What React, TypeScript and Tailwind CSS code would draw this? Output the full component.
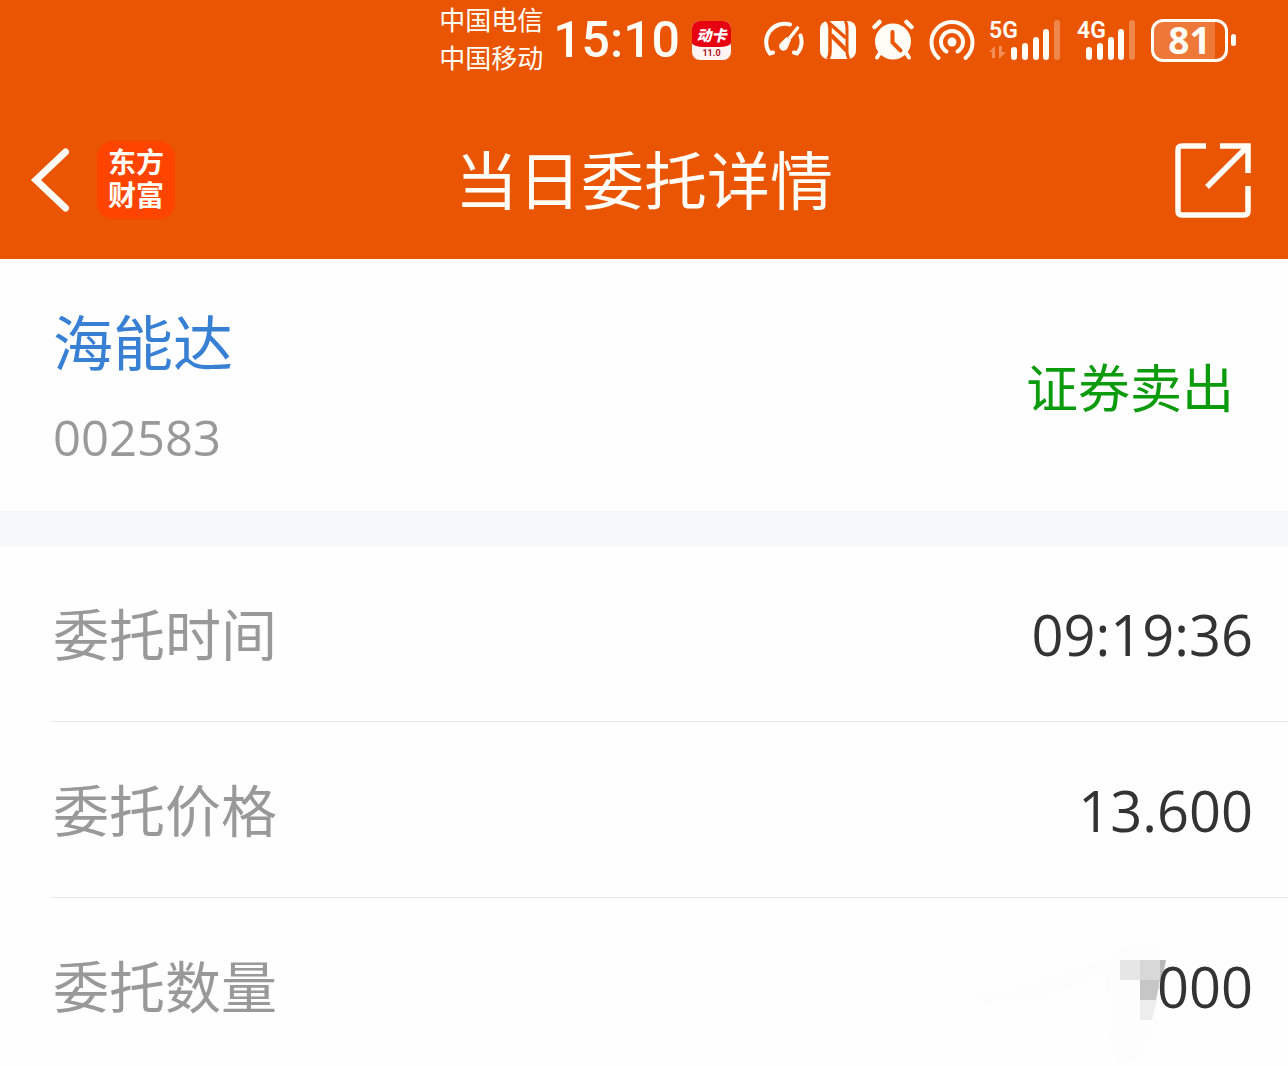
import React from "react";

interface OrderField {
    label: string;
    value: string;
    masked?: boolean;
}

const fields: OrderField[] = [
    { label: "委托时间", value: "09:19:36" },
    { label: "委托价格", value: "13.600" },
    { label: "委托数量", value: "000", masked: true },
];

export default function App() {
    return (
        <div className="min-h-screen bg-[#fefefe] font-['Open_Sans','Noto_Sans_CJK_SC',sans-serif] text-[#333333]">
            <div className="bg-[#ea5504] text-[#fffdf5]">
                <StatusBar />
                <TitleBar />
            </div>
            <main>
                <section className="flex items-center justify-between border-b-[35px] border-[#f6f8fa] pt-11 pr-[54px] pb-[39px] pl-[53px]">
                    <div>
                        <h2 className="text-[60px] leading-[80px] text-[#3880d4]">海能达</h2>
                        <p className="mt-5 text-[49px] leading-[69px] text-[#999999]">002583</p>
                    </div>
                    <p className="text-[52px] leading-[80px] text-[#0c9b0c]">证券卖出</p>
                </section>
                <dl>
                    {fields.map((field) => (
                        <FieldRow key={field.label} field={field} />
                    ))}
                </dl>
            </main>
        </div>
    );
}

function StatusBar() {
    return (
        <div className="flex h-20 items-center justify-end pr-[52px]">
            <div className="pb-0.5 text-[26px] leading-[38px]">
                <p>中国电信</p>
                <p>中国移动</p>
            </div>
            <time className="ml-2.5 font-['Roboto',sans-serif] text-[50px] leading-[76px] font-medium">15:10</time>
            <AppBadge />
            <div className="ml-8 flex items-center gap-[14px]">
                <GaugeIcon />
                <NfcIcon />
                <AlarmIcon />
                <HotspotIcon />
                <Signal5G />
                <Signal4G />
                <Battery />
            </div>
        </div>
    );
}

function TitleBar() {
    return (
        <header className="grid h-[179px] grid-cols-[1fr_auto_1fr] items-center px-[30px] pt-5">
            <div className="flex items-center gap-[27px]">
                <button type="button" aria-label="返回">
                    <svg
                        width="40"
                        height="66"
                        viewBox="0 0 40 66"
                        fill="none"
                        stroke="currentColor"
                        strokeWidth="7"
                        strokeLinecap="round"
                    >
                        <path d="M35.500 5 6 33l29.500 28" />
                    </svg>
                </button>
                <div className="flex h-[78px] w-[78px] items-center justify-center rounded-2xl bg-[#ff4400] pb-0.5 text-[28px] leading-[33px] font-bold">
                    <p>
                        东方
                        <br />
                        财富
                    </p>
                </div>
            </div>
            <h1 className="text-[63px] leading-[84px]">当日委托详情</h1>
            <button type="button" aria-label="分享" className="mr-[7px] justify-self-end">
                <svg width="76" height="76" viewBox="0 0 76 76" fill="none" stroke="currentColor" strokeWidth="5.5">
                    <path d="M31 4H7Q3 4 3 8v61q0 4 4 4h62q4 0 4-4V44" />
                    <path d="M45 4h28v27M72 5 32 45" />
                </svg>
            </button>
        </header>
    );
}

function FieldRow({ field }: { field: OrderField }) {
    return (
        <div className="group">
            <div className="relative flex items-center justify-between pt-12 pr-[35px] pb-[47px] pl-[53px] group-last:pb-8">
                <dt className="text-[56px] leading-[80px] text-[#999999]">{field.label}</dt>
                {field.masked && <Mosaic />}
                <dd className="relative text-[56px] leading-[80px]">{field.value}</dd>
            </div>
            <div className="bg-[#f9f9f9] pl-[52px] group-last:hidden">
                <div className="h-px bg-[#e9e9e9]" />
            </div>
        </div>
    );
}

// Pixelated smudge that hides the leading digits of the quantity
function Mosaic() {
    return (
        <svg className="absolute top-8 right-[118px]" width="200" height="136" viewBox="0 0 200 136" aria-hidden="true">
            <path
                d="M8 60 48 56 108 36Q148 26 158 12q24-10 38 8l-8 74-12 26q-18 22-32 8l-6-34-2-48-66 24-44 4Q2 84 8 60Z"
                fill="#fdfdfd"
            />
            <path d="M150 30h20v20h-20z" fill="#e6e6e6" />
            <path d="M170 30h20v20h-20z" fill="#d8d8d8" />
            <path d="M190 30h6l-4 20h-2z" fill="#b9b9b9" />
            <path d="M170 50h20l-4 20h-16z" fill="#c6c6c6" />
            <path d="M170 70h17l-5 20h-12z" fill="#ededed" />
        </svg>
    );
}

function AppBadge() {
    return (
        <div className="ml-3 flex h-[39px] w-[39px] flex-col overflow-hidden rounded-lg bg-[#fff4f2] text-center">
            <span className="h-[26px] rounded-b-[30%_4px] bg-[#e60012] text-[15px] leading-[28px] font-black text-white italic">
                动卡
            </span>
            <span className="font-['Roboto',sans-serif] text-[9px] leading-[13px] font-bold text-[#b01020]">11.0</span>
        </div>
    );
}

function GaugeIcon() {
    return (
        <svg width="42" height="40" viewBox="0 0 42 40" fill="none" stroke="currentColor" strokeLinecap="round">
            <path d="M27 4.500A18.500 18.500 0 0 0 7 33.500l3-1M37.500 15.500A18.500 18.500 0 0 1 34 33.500l-3-1" strokeWidth="4" />
            <path d="M34.500 8 22 24" strokeWidth="3.500" />
            <path d="M23.500 17 18 22.500a4.500 4.500 0 1 0 7 4.500L28 20Z" fill="currentColor" stroke="none" />
        </svg>
    );
}

function NfcIcon() {
    return (
        <svg width="38" height="40" viewBox="0 0 38 40">
            <rect x="1" y="1" width="36" height="38" rx="8" fill="currentColor" />
            <g fill="none" stroke="#ea5504">
                <path d="M8 0q3 3 3 8v24q0 4-2 7" strokeWidth="3.500" />
                <path d="M10 3 27 18" strokeWidth="3.500" />
                <path d="M12 15 28 31" strokeWidth="4" />
                <path d="M26 1q2 2 2 7v24q0 4 2 7" strokeWidth="3" />
            </g>
        </svg>
    );
}

function AlarmIcon() {
    return (
        <svg width="44" height="42" viewBox="0 0 44 42" fill="none" stroke="currentColor" strokeLinecap="round">
            <circle cx="22" cy="22.500" r="18" fill="currentColor" stroke="none" />
            <path d="M3.500 8 8.500 3M40.500 8l-5-5" strokeWidth="4.500" />
            <path d="M9 34l-3 4.500M35 34l3 4.500" strokeWidth="4" />
            <path d="M21.500 13v10.500l8 8" stroke="#ea5504" strokeWidth="4" />
        </svg>
    );
}

function HotspotIcon() {
    return (
        <svg width="46" height="42" viewBox="0 0 46 42" fill="none" stroke="currentColor" strokeWidth="4" strokeLinecap="round">
            <circle cx="23" cy="23" r="4.500" fill="currentColor" stroke="none" />
            <path d="M17.500 32.500a11 11 0 1 1 11 0" />
            <path d="M9.500 39A20.500 20.500 0 1 1 36.500 39" />
        </svg>
    );
}

function Signal5G() {
    return (
        <svg width="74" height="42" viewBox="0 0 74 42" fill="currentColor" className="overflow-visible">
            <text x="0" y="19" className="font-['Roboto',sans-serif] text-[23px] font-semibold">5G</text>
            <path d="M0 33l6-6v12H3v-6ZM10 27h3v6h4l-7 7Z" opacity="0.350" />
            <rect x="22" y="28" width="6" height="13" rx="3" />
            <rect x="33" y="24" width="6" height="17" rx="3" />
            <rect x="44" y="18" width="6" height="23" rx="3" />
            <rect x="54" y="10" width="6" height="31" rx="3" />
            <rect x="65" y="1" width="6" height="40" rx="3" opacity="0.300" />
        </svg>
    );
}

function Signal4G() {
    return (
        <svg width="60" height="42" viewBox="0 0 60 42" fill="currentColor" className="overflow-visible">
            <text x="0" y="19" className="font-['Roboto',sans-serif] text-[23px] font-semibold">4G</text>
            <rect x="9" y="28" width="6" height="13" rx="3" />
            <rect x="20" y="24" width="6" height="17" rx="3" />
            <rect x="31" y="18" width="6" height="23" rx="3" />
            <rect x="41" y="10" width="6" height="31" rx="3" />
            <rect x="52" y="1" width="6" height="40" rx="3" opacity="0.300" />
        </svg>
    );
}

function Battery() {
    return (
        <div className="flex items-center gap-[3px]">
            <div className="flex h-[43px] w-[77px] items-center justify-center rounded-xl border-[3px] border-current bg-linear-to-r from-[#ee7838] from-86% to-[#ea5504] to-86% pb-0.5">
                <span className="text-[37px] leading-[37px] font-bold">81</span>
            </div>
            <div className="h-3 w-[5px] rounded-full bg-current" />
        </div>
    );
}
